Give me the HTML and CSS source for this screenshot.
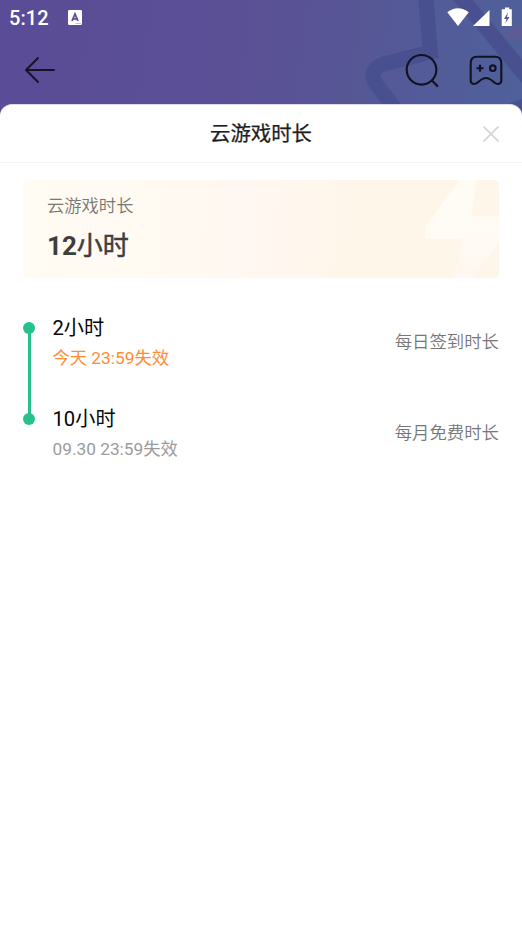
FILE: index.html
```html
<!DOCTYPE html>
<html lang="zh-CN">
<head>
<meta charset="utf-8">
<title>云游戏时长</title>
<link rel="stylesheet" href="styles.css">
</head>
<body>
<div class="screen">
  <header class="top">
    <svg class="backdrop" viewBox="0 0 522 120" aria-hidden="true">
      <g fill="none" stroke="#49508f" stroke-width="15">
        <path d="M425.500 -5L430.500 52L384 64Q367 70 376 84L404 120"/>
        <path d="M459 -5L530 81"/>
      </g>
      <path d="M502 106L522 99V110Z" fill="#49508f"/>
      <path d="M502 31L522 26V39L512 42Z" fill="#5d5b96"/>
    </svg>
    <div class="status">
      <span class="clock">5:12</span>
      <svg class="badge" viewBox="0 0 14 15"><rect width="14" height="15" rx="1.2" fill="#fff"/><path d="M4 11L7 4L10 11M5.2 8.8H8.8" fill="none" stroke="#5b4d96" stroke-width="1.8"/><path d="M7.500 13.500H13" stroke="#aaa2c8" stroke-width=".7"/></svg>
      <svg class="signals" viewBox="0 0 68 20">
        <g fill="#fff"><path d="M.3 4.300Q11 -3.700 21.800 4.300L11 18Z"/><path d="M42.500 2V18H26Z"/><path d="M58 -.5H62.300V1.200H64.800V18H54.700V1.200H58Z"/></g>
        <path d="M61 4.300L57 11H59.500L58.200 15.500L62.500 9H60Z" fill="#505895"/>
      </svg>
    </div>
    <nav class="nav">
      <svg class="back" viewBox="0 0 32 28"><path d="M14 2L2 14L14 26M2 14H30" fill="none" stroke="#151423" stroke-width="1.900" stroke-linecap="round" stroke-linejoin="round"/></svg>
      <svg class="search" viewBox="0 0 36 36"><circle cx="16.500" cy="16.800" r="14.800" fill="none" stroke="#111322" stroke-width="2.100"/><path d="M27 27.500L32.300 33" stroke="#111322" stroke-width="2.200" stroke-linecap="round"/></svg>
      <svg class="pad" viewBox="0 0 34 31" fill="none" stroke="#111322" stroke-width="2.100" stroke-linejoin="round"><path d="M8 1.800H26Q32.200 1.800 32.300 8V25.500C32.300 29 28.500 29.800 26 28C23.500 26.200 21 23 17 23C13 23 10.500 26.200 8 28C5.500 29.800 1.700 29 1.700 25.500V8Q1.800 1.800 8 1.800Z"/><path d="M7.500 13.200H14.500M11 9.700V16.700"/><circle cx="23.800" cy="13.200" r="2.800"/></svg>
    </nav>
  </header>
  <main class="sheet">
    <div class="head">
      <h1>云游戏时长</h1>
      <svg class="close" viewBox="0 0 16 16"><path d="M.5 .5L15.500 15.500M15.500 .5L.5 15.500" stroke="#d4d4d4" stroke-width="1.600"/></svg>
    </div>
    <section class="card">
      <svg class="bolt" viewBox="0 0 74 98" aria-hidden="true">
        <defs><linearGradient id="shine" x1="0" y1="0" x2="0" y2="1"><stop offset=".5" stop-color="#fffcf5"/><stop offset="1" stop-color="#fff7f1"/></linearGradient></defs>
        <path d="M35 0H51.500L46 36H74V62L47 98H29L38 59H0V47Z" fill="url(#shine)"/>
      </svg>
      <p class="label">云游戏时长</p>
      <p class="total">12<span class="unit">小时</span></p>
    </section>
    <ul class="list">
      <li class="item">
        <div class="rail"></div>
        <div class="info"><p class="hours">2小时</p><p class="expiry soon">今天 23:59失效</p></div>
        <span class="source">每日签到时长</span>
      </li>
      <li class="item">
        <div class="rail"></div>
        <div class="info"><p class="hours">10小时</p><p class="expiry">09.30 23:59失效</p></div>
        <span class="source">每月免费时长</span>
      </li>
    </ul>
  </main>
</div>
</body>
</html>
```
FILE: styles.css
```css
* { box-sizing: border-box; }
body, h1, p, ul { margin: 0; padding: 0; }
body { font-family: Roboto, "Noto Sans CJK SC", sans-serif; font-weight: 400; background: #fff; }
svg { display: block; flex: none; }
.screen { width: 522px; height: 928px; overflow: hidden; display: flex; flex-direction: column; }
.top {
  position: relative;
  height: 120px;
  flex: none;
  background: linear-gradient(98deg, #5a4c96 0%, #5b5096 45%, #575695 66%, #525c98 82%, #4f609a 100%);
}
.backdrop { position: absolute; inset: 0; width: 522px; height: 120px; }
.status { position: relative; height: 36px; display: flex; align-items: center; padding: 0 7px 0 9px; }
.clock { color: #fff; font-size: 20px; font-weight: 500; line-height: 24px; letter-spacing: .1px; }
.badge { width: 14px; height: 15px; margin: -1px 0 0 19px; }
.signals { width: 68px; height: 20px; margin: 0 0 0 auto; overflow: visible; }
.nav { position: relative; display: flex; align-items: center; height: 68px; padding: 0 19px 0 24px; }
.back { width: 32px; height: 28px; }
.search { width: 36px; height: 36px; margin: 1px 0 0 auto; }
.pad { width: 34px; height: 31px; margin: 0 0 0 28px; }
.sheet { position: relative; flex: 1; margin-top: -16px; background: #fff; border-radius: 12px 12px 0 0; border-top: 1px solid #dedbea; }
.head { height: 58px; display: flex; align-items: center; justify-content: flex-end; padding: 0 23px; border-bottom: 1px solid #f3f3f3; }
h1 { flex: 1; padding-left: 16px; text-align: center; font-size: 20.400px; font-weight: 400; -webkit-text-stroke: .25px #1d1d1d; line-height: 30px; color: #1d1d1d; }
.close { width: 16px; height: 16px; }
.card {
  position: relative;
  height: 98px;
  margin: 17px 23px 0;
  padding: 13px 24px 0;
  border-radius: 5px;
  overflow: hidden;
  background: linear-gradient(95deg, #fffcf4 0%, #fff9f2 35%, #fff7f1 48%, #fff6ea 70%, #fff6eb 100%);
}
.bolt { position: absolute; right: 0; top: 0; width: 74px; height: 98px; }
.label { font-size: 17.300px; font-weight: 350; line-height: 26px; color: #797772; }
.total { margin-top: 9px; font-size: 26px; font-weight: 700; line-height: 36px; color: #3e3e3d; }
.unit { font-weight: 400; -webkit-text-stroke: .5px #3e3e3d; }
.list { list-style: none; margin: 35px 23px 0; }
.item { display: flex; height: 90.500px; }
.rail { position: relative; width: 12px; margin: 9px 17.500px 0 0; }
.rail::before { content: ""; position: absolute; width: 12px; height: 12px; border-radius: 50%; background: #28c18b; }
.item:first-child .rail::after { content: ""; position: absolute; left: 4.500px; top: 6px; width: 3px; height: 90px; background: #28c18b; }
.hours { font-size: 20.200px; line-height: 30px; color: #050505; }
.expiry { margin-top: 1px; font-size: 17.300px; line-height: 28px; color: #9c9c9c; }
.soon { color: #ff8c35; }
.source { margin: 16px 0 0 auto; font-size: 17.400px; font-weight: 350; line-height: 26px; color: #777; }
```
